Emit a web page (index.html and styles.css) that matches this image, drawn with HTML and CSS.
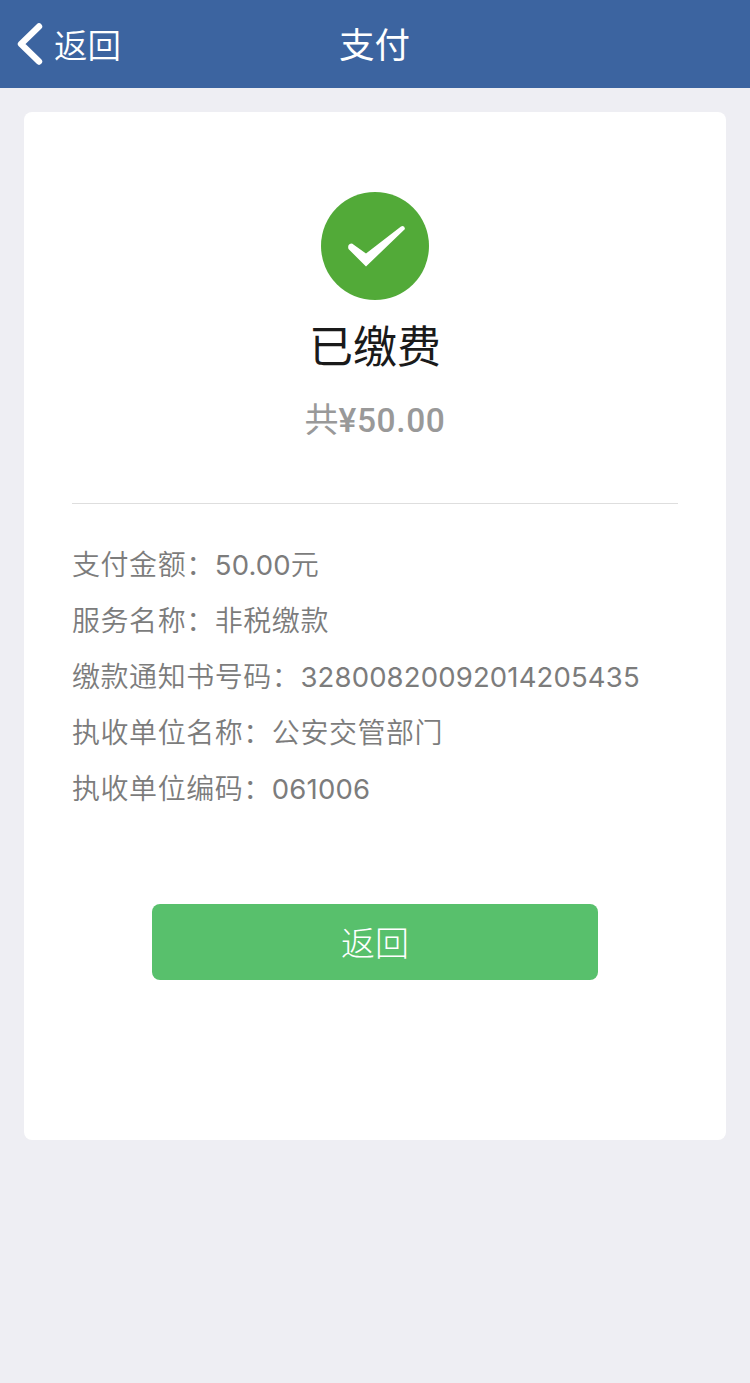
FILE: index.html
```
<!DOCTYPE html>
<html lang="zh-CN">
<head>
  <meta charset="UTF-8" />
  <meta name="viewport" content="width=device-width, initial-scale=1" />
  <title>支付</title>
  <link rel="stylesheet" href="styles.css">
</head>
<body>

<header class="navbar">
  <a href="#" class="nav-back">
    <svg width="28" height="44" viewBox="0 0 28 44">
      <path d="M23 4.5 L5 22 L23 39.5" fill="none" stroke="#fff" stroke-width="6.4" stroke-linecap="round" stroke-linejoin="round" />
    </svg>
    <span>返回</span>
  </a>
  <h1>支付</h1>
</header>

<main class="card">
  <div class="status">
    <svg width="108" height="108" viewBox="0 0 108 108">
      <circle cx="54" cy="54" r="54" fill="#52aa38" />
      <path d="M31 51.5 L45 61.5 L80 34.5 Q83.5 33 84 37 L45 74.5 L27.5 57 Q26 52 31 51.5 Z" fill="#fff" />
    </svg>
    <h2>已缴费</h2>
    <p class="amount">共<span>¥50.00</span></p>
  </div>

  <ul class="details">
    <li>支付金额：<span class="num">50.00</span>元</li>
    <li>服务名称：非税缴款</li>
    <li>缴款通知书号码：<span class="num">32800820092014205435</span></li>
    <li>执收单位名称：公安交管部门</li>
    <li>执收单位编码：<span class="num">061006</span></li>
  </ul>

  <button type="button" class="btn">返回</button>
</main>

</body>
</html>
```

FILE: styles.css
```
body {
  font-family: "Noto Sans CJK SC", sans-serif;
  background: #eeeef3;
  margin: 0;
  color: #1a1a1a;
}
.navbar {
  display: grid;
  grid-template-columns: 1fr auto 1fr;
  align-items: center;
  height: 88px;
  padding: 0 16px;
  background: #3c64a0;
  box-sizing: border-box;
  color: #fff;
}
.nav-back {
  display: flex;
  align-items: center;
  gap: 10px;
  font-size: 33.5px;
  font-weight: 350;
  line-height: 44px;
  color: #fff;
  text-decoration: none;
}
.nav-back span {
  padding-bottom: 1px;
}
.navbar h1 {
  margin: 0;
  padding: 0 1px 3px 0;
  font-size: 35.5px;
  font-weight: 400;
  line-height: 50px;
}
.card {
  height: 1028px;
  margin: 24px;
  padding: 80px 48px 0;
  background: #fff;
  border-radius: 8px;
  box-sizing: border-box;
}
.status {
  display: flex;
  flex-direction: column;
  align-items: center;
  height: 312px;
  border-bottom: 1px solid #dedede;
  box-sizing: border-box;
}
.status h2 {
  margin: 13px 0 0;
  font-size: 44px;
  font-weight: 400;
  line-height: 62px;
}
.amount {
  margin: 19px 0 0;
  font-size: 34px;
  font-weight: 400;
  line-height: 48px;
  color: #999;
}
.amount span {
  font-family: Roboto, sans-serif;
  font-size: 33.5px;
  font-weight: 500;
  line-height: 1;
  letter-spacing: 0.6px;
}
.details {
  list-style: none;
  margin: 31px 0 0;
  padding: 0;
  font-size: 28px;
  font-weight: 350;
  line-height: 56px;
  letter-spacing: 0.55px;
  color: #7c7c7c;
}
.num {
  font-family: Inter, sans-serif;
  font-size: 27.5px;
  font-weight: 400;
  line-height: 1;
  letter-spacing: 0.15px;
}
.btn {
  display: block;
  width: 446px;
  height: 76px;
  margin: 89px auto 0;
  padding: 0 0 2px;
  border: none;
  border-radius: 8px;
  background: #58c06c;
  color: #fff;
  font-family: inherit;
  font-size: 34px;
  font-weight: 300;
  cursor: pointer;
}
```
